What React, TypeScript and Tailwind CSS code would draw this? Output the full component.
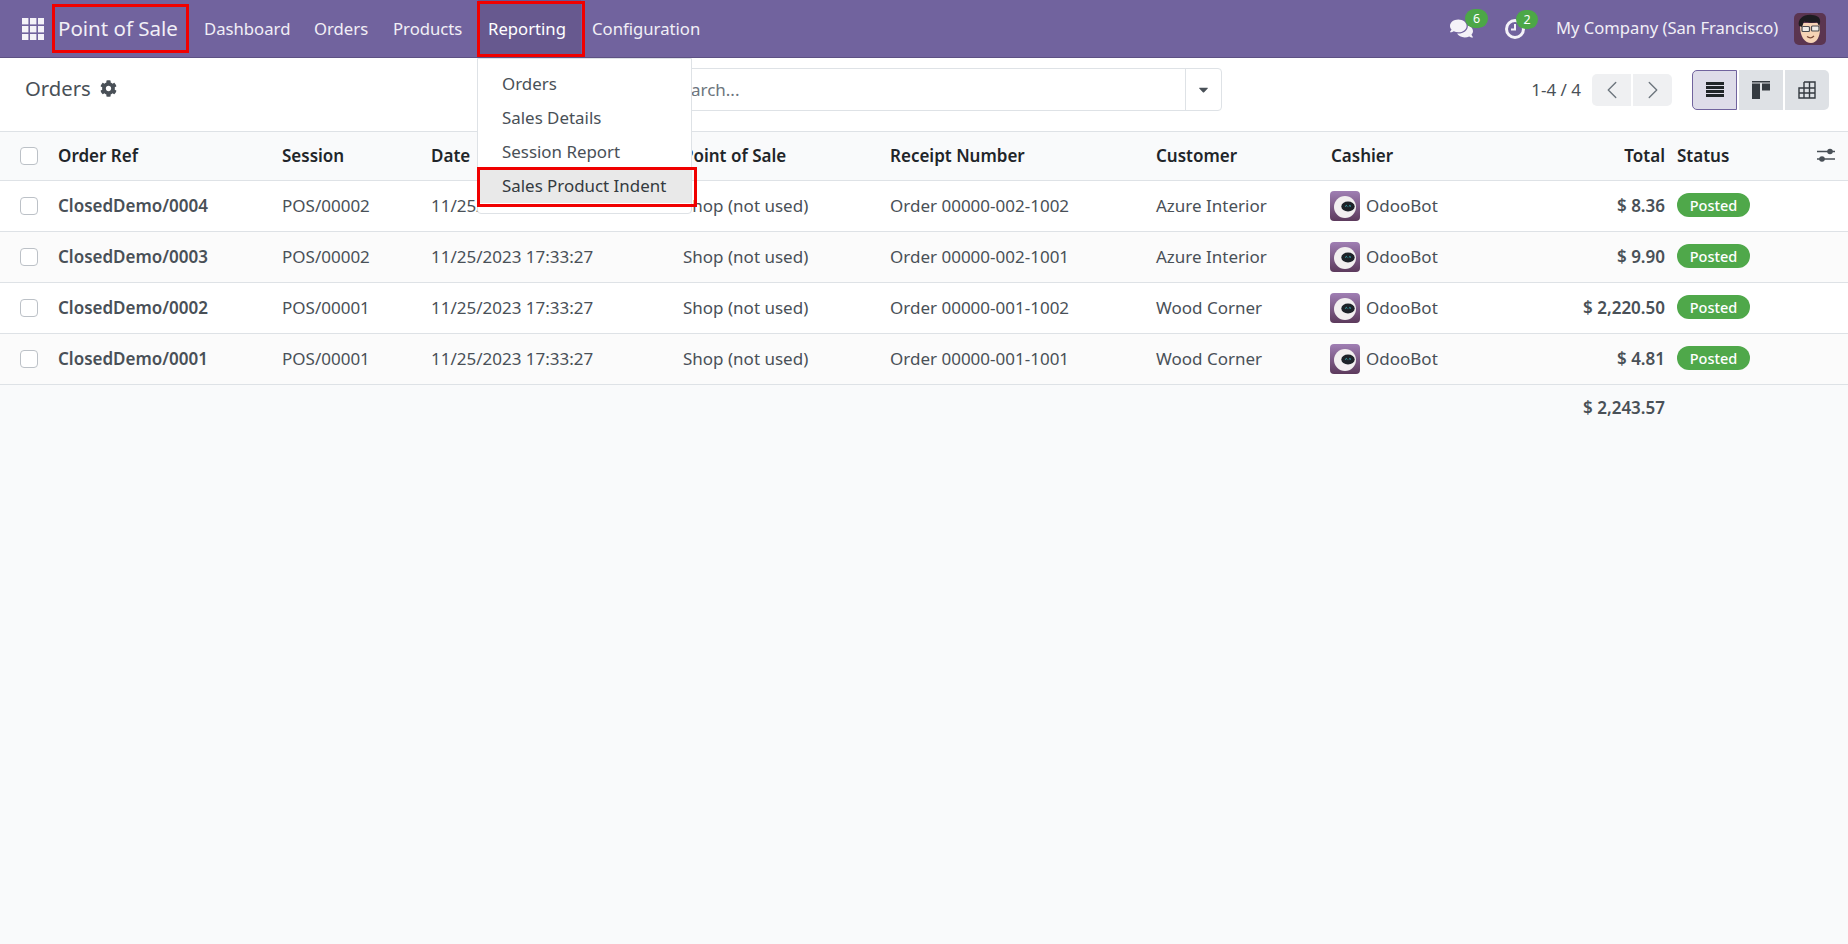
import { ChevronLeft, ChevronRight } from 'lucide-react';
import { FaCog, FaComments, FaCaretDown } from 'react-icons/fa';

const orders = [
  { ref: 'ClosedDemo/0004', session: 'POS/00002', receipt: 'Order 00000-002-1002', customer: 'Azure Interior', total: '$ 8.36' },
  { ref: 'ClosedDemo/0003', session: 'POS/00002', receipt: 'Order 00000-002-1001', customer: 'Azure Interior', total: '$ 9.90' },
  { ref: 'ClosedDemo/0002', session: 'POS/00001', receipt: 'Order 00000-001-1002', customer: 'Wood Corner', total: '$ 2,220.50' },
  { ref: 'ClosedDemo/0001', session: 'POS/00001', receipt: 'Order 00000-001-1001', customer: 'Wood Corner', total: '$ 4.81' },
];

const columns = 'grid grid-cols-[58px_224px_149px_252px_207px_266px_175px_200px_134px_12px_171px] items-center';

function AppsIcon() {
  return (
    <svg width="22" height="22" viewBox="0 0 22 22" fill="#f4f2f8">
      {[0, 8, 16].map((y) =>
        [0, 8, 16].map((x) => <rect key={`${x}-${y}`} x={x} y={y} width="6.4" height="6.4" />),
      )}
    </svg>
  );
}

function ClockIcon() {
  return (
    <svg width="22" height="22" viewBox="0 0 22 22" fill="none" stroke="#f4f2f8" strokeWidth="3">
      <circle cx="11" cy="11" r="8.5" />
      <path d="M11 6v5.5H7" strokeWidth="2" />
    </svg>
  );
}

function OptionsIcon() {
  return (
    <svg width="18" height="16" viewBox="0 0 18 16" fill="#495057" stroke="#495057">
      <path d="M0 4.5h18M0 12h18" strokeWidth="1.3" />
      <circle cx="13" cy="4.5" r="2.8" stroke="none" />
      <circle cx="5" cy="12" r="2.8" stroke="none" />
    </svg>
  );
}

function BotAvatar() {
  return (
    <svg width="30" height="30" viewBox="0 0 30 30" className="shrink-0">
      <defs>
        <linearGradient id="botBg" x1="0" y1="0" x2="0" y2="1">
          <stop offset="0" stopColor="#a07fb4" />
          <stop offset="1" stopColor="#5c3a5c" />
        </linearGradient>
      </defs>
      <rect width="30" height="30" rx="4" fill="url(#botBg)" />
      <circle cx="15" cy="16" r="11" fill="#f2eff0" />
      <ellipse cx="18" cy="15.5" rx="6.7" ry="5" fill="#1d2228" />
      <path d="M15.2 15.5l1.1-1 1.1 1M18.8 15.5l1.1-1 1.1 1" stroke="#3fc6cf" strokeWidth="0.9" fill="none" />
    </svg>
  );
}

function UserAvatar() {
  return (
    <svg width="32" height="32" viewBox="0 0 32 32">
      <rect width="32" height="32" rx="5" fill="#5b3550" />
      <path d="M6 13c0 11 5 17 11 17s9-7 9-14l-1-6H8z" fill="#f6d3b5" />
      <path d="M5 13C3 6 10 1 18 2c6 .5 9 3 8 8l-1 3-2-4c-4 1-9 1-13-.5L8 14z" fill="#1d1c20" />
      <rect x="8" y="13.5" width="7.5" height="5" rx="1" fill="#efece6" stroke="#4a4a4e" strokeWidth="1.2" />
      <rect x="17.5" y="13" width="7.5" height="5" rx="1" fill="#efece6" stroke="#4a4a4e" strokeWidth="1.2" />
      <path d="M13 23.5c2 1.5 5 1.5 7-.5" stroke="#7a4a38" strokeWidth="1.2" fill="none" />
    </svg>
  );
}

function ListIcon() {
  return (
    <svg width="18" height="15" viewBox="0 0 18 15" fill="#212529">
      <rect width="18" height="3" />
      <rect y="4" width="18" height="3" />
      <rect y="8" width="18" height="3" />
      <rect y="12" width="18" height="3" />
    </svg>
  );
}

function KanbanIcon() {
  return (
    <svg width="18" height="18" viewBox="0 0 18 18" fill="#343a40">
      <rect width="18" height="1.5" />
      <rect y="2.5" width="8" height="15.5" />
      <rect x="10" y="2.5" width="8" height="7" />
    </svg>
  );
}

function PivotIcon() {
  return (
    <svg width="18" height="18" viewBox="0 0 18 18" fill="none" stroke="#343a40" strokeWidth="1.4">
      <path d="M6 1h11v16H1V7h16M6 1v16M11.5 1v16M1 12h16" />
    </svg>
  );
}

function Checkbox() {
  return <div className="w-[18px] h-[18px] ml-[20px] rounded-[4px] border border-[#bcc1c7] bg-white" />;
}

export default function App() {
  return (
    <div className="relative w-[1848px] h-[944px] overflow-hidden bg-[#f9fafb] font-['Noto_Sans',sans-serif] text-[17px] text-[#495057]">
      <nav className="flex items-center h-[58px] bg-[#71639e] border-b border-[#5d5183] text-[16.7px] text-[#f1eff6]">
        <div className="ml-[22px] w-[36px] flex">
          <AppsIcon />
        </div>
        <div className="w-[134px] text-[20.5px]">Point of Sale</div>
        <div className="w-[110px] pl-[12px]">Dashboard</div>
        <div className="w-[79px] pl-[12px]">Orders</div>
        <div className="w-[97px] pl-[12px]">Products</div>
        <div className="w-[103px] pl-[10px] self-stretch flex items-center bg-[#67598f] text-white">Reporting</div>
        <div className="pl-[11px]">Configuration</div>
        <div className="flex-1" />
        <div className="relative w-[54px] flex">
          <FaComments size={23} color="#f4f2f8" />
          <span className="absolute left-[15px] -top-[8px] w-[23px] h-[19px] rounded-full bg-[#4ca747] text-white text-[12.5px] leading-[19px] text-center">6</span>
        </div>
        <div className="relative w-[52px] flex">
          <ClockIcon />
          <span className="absolute left-[12px] -top-[8px] w-[22px] h-[19px] rounded-full bg-[#4ca747] text-white text-[12.5px] leading-[19px] text-center">2</span>
        </div>
        <div className="w-[238px] whitespace-nowrap text-[16.6px]">My Company (San Francisco)</div>
        <div className="w-[54px] flex">
          <UserAvatar />
        </div>
      </nav>

      <section className="flex items-center h-[74px] pb-[10px] bg-white border-b border-[#dee2e6]">
        <div className="w-[650px] pl-[25px] flex items-center gap-[9px] text-[20.3px] -translate-y-[1px]">
          Orders
          <FaCog size={17} color="#495057" />
        </div>
        <div className="w-[572px] h-[43px] flex items-center border border-[#dee2e6] rounded-[4px]">
          <div className="flex-1 pl-[21px] text-[#6c757d]">Search...</div>
          <div className="w-[36px] h-full flex items-center justify-center border-l border-[#dee2e6]">
            <FaCaretDown size={15} color="#495057" />
          </div>
        </div>
        <div className="w-[359px] text-right whitespace-nowrap">1-4 / 4</div>
        <div className="ml-[11px] flex gap-[2px] h-[32px]">
          <div className="w-[39px] flex items-center justify-center bg-[#eff0f2] rounded-l-[5px]">
            <ChevronLeft size={30} strokeWidth={1.1} color="#6c757d" />
          </div>
          <div className="w-[39px] flex items-center justify-center bg-[#eff0f2] rounded-r-[5px]">
            <ChevronRight size={30} strokeWidth={1.1} color="#6c757d" />
          </div>
        </div>
        <div className="ml-[20px] flex gap-[2px] h-[40px]">
          <div className="w-[45px] flex items-center justify-center bg-[#dedce9] border border-[#71639e] rounded-l-[5px]">
            <ListIcon />
          </div>
          <div className="w-[44px] flex items-center justify-center bg-[#dee1e5]">
            <KanbanIcon />
          </div>
          <div className="w-[44px] flex items-center justify-center bg-[#dee1e5] rounded-r-[5px]">
            <PivotIcon />
          </div>
        </div>
      </section>

      <div className={`${columns} h-[49px] bg-[#f9fafb] border-b border-[#dee2e6] font-semibold text-[#212529]`}>
        <Checkbox />
        <div>Order Ref</div>
        <div>Session</div>
        <div>Date</div>
        <div>Point of Sale</div>
        <div>Receipt Number</div>
        <div>Customer</div>
        <div>Cashier</div>
        <div className="text-right">Total</div>
        <div />
        <div className="relative">
          Status
          <span className="absolute left-[140px] top-[4px]">
            <OptionsIcon />
          </span>
        </div>
      </div>

      {orders.map((o, i) => (
        <div
          key={o.ref}
          className={`${columns} h-[51px] border-b border-[#dee2e6] ${i % 2 === 0 ? 'bg-white' : 'bg-[#fbfbfb]'}`}
        >
          <Checkbox />
          <div className="font-semibold">{o.ref}</div>
          <div>{o.session}</div>
          <div>11/25/2023 17:33:27</div>
          <div>Shop (not used)</div>
          <div>{o.receipt}</div>
          <div>{o.customer}</div>
          <div className="flex items-center gap-[6px] -ml-[1px]">
            <BotAvatar />
            OdooBot
          </div>
          <div className="text-right font-semibold">{o.total}</div>
          <div />
          <div className="-translate-y-[1px]">
            <span className="inline-block w-[73px] h-[24px] rounded-full bg-[#4fa84a] text-white text-[14.5px] font-medium leading-[24px] text-center">
              Posted
            </span>
          </div>
        </div>
      ))}

      <div className={`${columns} h-[46px] font-semibold`}>
        <div className="col-start-9 text-right whitespace-nowrap">$ 2,243.57</div>
      </div>

      {/* open Reporting menu */}
      <div className="absolute left-[477px] top-[58px] w-[215px] h-[156px] pt-[8px] bg-white border border-[#dee2e6] rounded-b-[4px] text-[16.9px]">
        <div className="h-[34px] pl-[24px] leading-[34px]">Orders</div>
        <div className="h-[34px] pl-[24px] leading-[34px]">Sales Details</div>
        <div className="h-[34px] pl-[24px] leading-[34px]">Session Report</div>
        <div className="h-[34px] pl-[24px] leading-[34px] bg-[#e9e9e9] text-[#343a40] whitespace-nowrap">Sales Product Indent</div>
      </div>

      {/* red annotation frames */}
      <div className="absolute left-[52px] top-[4px] w-[137px] h-[49px] border-[3px] border-[#f00000]" />
      <div className="absolute left-[477px] top-[1px] w-[108px] h-[56px] border-[3px] border-[#f00000]" />
      <div className="absolute left-[477px] top-[167px] w-[220px] h-[40px] border-[3px] border-[#f00000]" />
    </div>
  );
}
